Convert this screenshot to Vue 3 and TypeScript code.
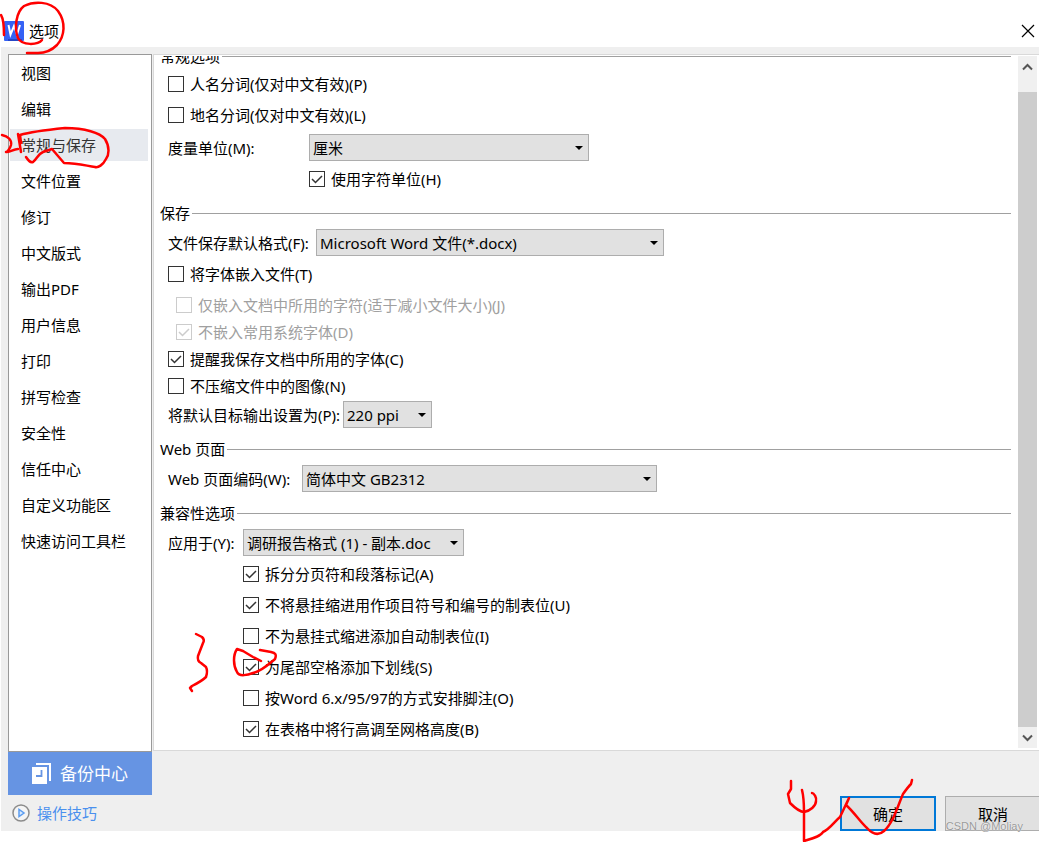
<script setup lang="ts">
import { ref } from 'vue'

interface Option {
  id: string
  label: string
  checked: boolean
  disabled?: boolean
}

const sections = [
  '视图', '编辑', '常规与保存', '文件位置', '修订', '中文版式', '输出PDF',
  '用户信息', '打印', '拼写检查', '安全性', '信任中心', '自定义功能区', '快速访问工具栏',
]
const active = ref('常规与保存')

const segmentation = ref<Option[]>([
  { id: 'person', label: '人名分词(仅对中文有效)(P)', checked: false },
  { id: 'place', label: '地名分词(仅对中文有效)(L)', checked: false },
])
const charUnit = ref(true)
const embedFonts = ref(false)
const embedding = ref<Option[]>([
  { id: 'subset', label: '仅嵌入文档中所用的字符(适于减小文件大小)(J)', checked: false, disabled: true },
  { id: 'system', label: '不嵌入常用系统字体(D)', checked: true, disabled: true },
  { id: 'remind', label: '提醒我保存文档中所用的字体(C)', checked: true },
  { id: 'nocompress', label: '不压缩文件中的图像(N)', checked: false },
])
const compatibility = ref<Option[]>([
  { id: 'split', label: '拆分分页符和段落标记(A)', checked: true },
  { id: 'hanging', label: '不将悬挂缩进用作项目符号和编号的制表位(U)', checked: true },
  { id: 'autotab', label: '不为悬挂式缩进添加自动制表位(I)', checked: false },
  { id: 'trailing', label: '为尾部空格添加下划线(S)', checked: true },
  { id: 'footnote', label: '按Word 6.x/95/97的方式安排脚注(O)', checked: false },
  { id: 'grid', label: '在表格中将行高调至网格高度(B)', checked: true },
])

const strokes = [
  'M1 15Q4 20 4 35',
  'M42 40C38 45 22 46 18 38C14 28 16 12 24 6C34 1 50 1 58 11C66 22 65 36 57 45C50 52 44 53 38 53L27 53',
  'M2 135C8 136 12 140 11 145C10 149 7 152 6 152C10 153 13 149 18 149',
  'M18 134L21 152',
  'M21 143L20 135C30 132 45 130 65 128C85 128 100 133 105 139C110 147 109 155 106 159C103 165 98 168 95 167C87 166 78 163 64 163L52 149L43 152C38 154 37 159 33 162C30 163 28 160 26 157',
  'M196 634L202 637Q205 640 203 643L198 656Q197 661 201 663L206 667Q208 671 206 677Q202 681 192 686L190 688L192 691',
  'M261 661L253 657L243 651L237 649C233 655 233 665 237 672C239 677 248 675 253 673C262 671 269 664 275 659C277 654 275 653 271 652L260 650',
  'M791 781L791 789L788 794L790 803C795 808 801 812 804 812C810 811 816 806 816 801C817 798 814 793 812 793',
  'M802 790Q804 798 804 812L804 841C814 838 821 836 823 832C830 829 835 821 840 817L849 798L846 805C854 812 861 823 867 828Q876 838 884 831C893 823 897 808 903 794Q908 787 911 784L912 780',
]
</script>

<template>
  <div class="dialog">
    <header class="titlebar">
      <svg class="logo" width="20" height="20" viewBox="0 0 20 20" aria-hidden="true">
        <rect width="20" height="20" rx="1" fill="#3562f5" />
        <path d="M4 18h14v2H4z" fill="#2646c5" />
        <path d="M4.500 4l2 9.500L10 5l3 8.500L16 4" fill="none" stroke="#fff" stroke-width="2" />
      </svg>
      <h1>选项</h1>
      <button class="close" aria-label="关闭">
        <svg width="14" height="14" viewBox="0 0 14 14"><path d="M1 1l12 12M13 1L1 13" stroke="#000" stroke-width="1.200" /></svg>
      </button>
    </header>

    <div class="body">
      <aside class="side">
        <nav class="nav">
          <button
            v-for="name in sections"
            :key="name"
            class="nav-item"
            :class="{ active: name === active }"
            @click="active = name"
          >{{ name }}</button>
        </nav>
        <button class="backup">
          <svg width="20" height="22" viewBox="0 0 20 22" aria-hidden="true">
            <path d="M4 1V0h15v18h-2V2H4z" fill="#fff" />
            <path d="M0 4h15v17H0z" fill="#fff" />
            <path d="M9.500 7v6H4" fill="none" stroke="#6694e3" stroke-width="1.800" />
          </svg>
          <span>备份中心</span>
        </button>
        <a class="tips" href="#">
          <svg width="18" height="18" viewBox="0 0 18 18" aria-hidden="true">
            <circle cx="9" cy="9" r="8" fill="#f5f5f5" stroke="#8c8c8c" stroke-width="1.500" />
            <path d="M7 5.500v7L12 9z" fill="#d9eaff" stroke="#5c9df0" stroke-width="1.500" />
          </svg>
          <span>操作技巧</span>
        </a>
      </aside>

      <div class="main">
        <div class="panel">
          <div class="content">
            <section class="group first">
              <h2>常规选项</h2>
              <label v-for="o in segmentation" :key="o.id" class="check">
                <input v-model="o.checked" type="checkbox" /><span>{{ o.label }}</span>
              </label>
              <div class="field unit">
                <label for="unit">度量单位(M):</label>
                <select id="unit"><option>厘米</option></select>
              </div>
              <label class="check under-unit">
                <input v-model="charUnit" type="checkbox" /><span>使用字符单位(H)</span>
              </label>
            </section>

            <section class="group">
              <h2>保存</h2>
              <div class="field format">
                <label for="format">文件保存默认格式(F):</label>
                <select id="format"><option>Microsoft Word 文件(*.docx)</option></select>
              </div>
              <label class="check">
                <input v-model="embedFonts" type="checkbox" /><span>将字体嵌入文件(T)</span>
              </label>
              <div class="compact">
                <label v-for="o in embedding" :key="o.id" class="check" :class="{ disabled: o.disabled }">
                  <input v-model="o.checked" type="checkbox" :disabled="o.disabled" /><span>{{ o.label }}</span>
                </label>
              </div>
              <div class="field ppi">
                <label for="ppi">将默认目标输出设置为(P):</label>
                <select id="ppi"><option>220 ppi</option></select>
              </div>
            </section>

            <section class="group">
              <h2>Web 页面</h2>
              <div class="field encoding">
                <label for="encoding">Web 页面编码(W):</label>
                <select id="encoding"><option>简体中文 GB2312</option></select>
              </div>
            </section>

            <section class="group last">
              <h2>兼容性选项</h2>
              <div class="field apply">
                <label for="apply">应用于(Y):</label>
                <select id="apply"><option>调研报告格式 (1) - 副本.doc</option></select>
              </div>
              <label v-for="o in compatibility" :key="o.id" class="check under-apply">
                <input v-model="o.checked" type="checkbox" /><span>{{ o.label }}</span>
              </label>
            </section>
          </div>
          <div class="scrollbar">
            <button aria-label="向上滚动">
              <svg width="11" height="8" viewBox="0 0 11 8"><path d="M1 6.500L5.500 2L10 6.500" /></svg>
            </button>
            <div class="thumb"></div>
            <button aria-label="向下滚动">
              <svg width="11" height="8" viewBox="0 0 11 8"><path d="M1 1.500L5.500 6L10 1.500" /></svg>
            </button>
          </div>
        </div>
        <footer class="actions">
          <button class="primary">确定</button>
          <button>取消</button>
        </footer>
      </div>
    </div>

    <svg class="ink" width="1039" height="842" viewBox="0 0 1039 842" aria-hidden="true">
      <path v-for="d in strokes" :key="d" :d="d" />
    </svg>
    <span class="watermark">CSDN @Moliay</span>
  </div>
</template>

<style>
body {
  margin: 0;
  background: #fff;
}
</style>

<style scoped>
.dialog {
  position: relative;
  overflow: hidden;
  padding-bottom: 11px;
  color: #000;
  font: 15px/20px "Noto Sans", "Noto Sans CJK SC", sans-serif;
}
.dialog * {
  box-sizing: border-box;
}
button,
select {
  font: inherit;
  color: inherit;
}
h1,
h2 {
  margin: 0;
  font: inherit;
}
.titlebar {
  display: flex;
  align-items: center;
  gap: 5px;
  height: 47px;
  padding: 15px 4px 0;
}
.close {
  display: flex;
  margin-left: auto;
  padding: 0;
  border: 0;
  background: none;
}
.body {
  display: flex;
  gap: 1px;
  margin-left: 1px;
  padding: 7px 0 0 7px;
  background: #efefef;
}
.side {
  display: flex;
  flex-direction: column;
  flex: 0 0 144px;
}
.nav {
  display: flex;
  flex: 1;
  flex-direction: column;
  gap: 4px;
  padding: 2px 3px 2px 1px;
  border: 1px solid #999;
  background: #fff;
}
.nav-item {
  height: 32px;
  padding: 0 11px;
  border: 0;
  background: none;
  text-align: left;
}
.nav-item.active {
  background: #e7eaef;
  color: #333;
}
.backup {
  display: flex;
  align-items: center;
  justify-content: center;
  gap: 8px;
  height: 43px;
  padding: 0;
  border: 0;
  background: #6694e3;
  color: #fff;
  font-size: 17px;
}
.tips {
  display: flex;
  align-items: center;
  gap: 7px;
  height: 36px;
  padding-left: 4px;
  color: #4a90ee;
  text-decoration: none;
}
.main {
  flex: 1;
  min-width: 0;
}
.panel {
  display: flex;
  padding: 1px 2px 2px 0;
  border: 1px solid #d9d9d9;
  border-width: 1px 0 1px 1px;
  background: #fff;
}
.content {
  flex: 1;
  overflow: hidden;
  padding: 0 7px 4px 6px;
}
.group {
  padding-bottom: 9px;
}
.group.first {
  margin-top: -10px;
}
.group.last {
  padding-bottom: 0;
}
h2 {
  display: flex;
  align-items: center;
  gap: 2px;
  height: 20px;
  margin-bottom: 4px;
}
.first h2 {
  margin-bottom: 2px;
}
h2::after {
  flex: 1;
  height: 1px;
  background: #a0a0a0;
  content: "";
}
.check {
  display: flex;
  align-items: center;
  gap: 6px;
  height: 31px;
  padding-left: 8px;
}
.compact {
  padding-top: 2px;
}
.compact .check {
  height: 27px;
}
.check.disabled {
  padding-left: 16px;
  color: #a0a0a0;
}
.check.under-unit {
  padding-left: 149px;
}
.check.under-apply {
  padding-left: 83px;
}
.check input {
  width: 16px;
  height: 16px;
  margin: 0;
  border: 1px solid #333;
  background: #fff;
  appearance: none;
}
.check input:checked {
  background: url("data:image/svg+xml,%3Csvg xmlns='http://www.w3.org/2000/svg' viewBox='0 0 14 14'%3E%3Cpath d='M2 7l3.500 3.500L12 4' fill='none' stroke='%23333' stroke-width='1.500'/%3E%3C/svg%3E");
}
.check input:disabled {
  border-color: #ccc;
}
.check input:checked:disabled {
  background: url("data:image/svg+xml,%3Csvg xmlns='http://www.w3.org/2000/svg' viewBox='0 0 14 14'%3E%3Cpath d='M2 7l3.500 3.500L12 4' fill='none' stroke='%23ccc' stroke-width='1.500'/%3E%3C/svg%3E");
}
.field {
  display: flex;
  align-items: center;
  height: 31px;
  padding-left: 8px;
}
.field label {
  flex: none;
  white-space: nowrap;
}
.field select {
  height: 27px;
  padding: 0 24px 0 3px;
  border: 1px solid #adadad;
  border-radius: 0;
  background: #e1e1e1 url("data:image/svg+xml,%3Csvg xmlns='http://www.w3.org/2000/svg' width='8' height='4'%3E%3Cpath d='M0 0h8L4 4z'/%3E%3C/svg%3E") no-repeat right 5px center;
  appearance: none;
}
.field.unit {
  margin-top: 2px;
}
.unit label {
  width: 141px;
}
.unit select {
  width: 280px;
}
.format label {
  width: 148px;
}
.format select {
  width: 348px;
}
.ppi label {
  width: 175px;
}
.ppi select {
  width: 89px;
}
.encoding label {
  width: 134px;
}
.encoding select {
  width: 355px;
}
.apply label {
  width: 75px;
}
.apply select {
  width: 221px;
}
.scrollbar {
  display: flex;
  flex-direction: column;
  width: 19px;
  background: #f0f0f0;
}
.scrollbar button {
  display: flex;
  align-items: center;
  justify-content: center;
  height: 21px;
  padding: 0;
  border: 0;
  background: none;
}
.scrollbar path {
  fill: none;
  stroke: #555;
  stroke-width: 2;
}
.thumb {
  flex: 1;
  margin-top: 15px;
  background: #cdcdcd;
}
.actions {
  display: flex;
  justify-content: flex-end;
  gap: 9px;
  height: 80px;
  margin-right: -2px;
  padding-top: 45px;
}
.actions button {
  width: 96px;
  height: 35px;
  padding: 0;
  border: 1px solid #adadad;
  background: #e1e1e1;
}
.actions .primary {
  border: 2px solid #0078d7;
}
.ink {
  position: absolute;
  top: 0;
  left: 0;
  pointer-events: none;
}
.ink path {
  fill: none;
  stroke: #f00;
  stroke-width: 2.500;
  stroke-linecap: round;
  stroke-linejoin: round;
}
.watermark {
  position: absolute;
  right: 16px;
  bottom: 8px;
  color: #999;
  font: 11px/16px "Liberation Sans", sans-serif;
  text-shadow: 0 0 1px #fff;
  pointer-events: none;
}
</style>
